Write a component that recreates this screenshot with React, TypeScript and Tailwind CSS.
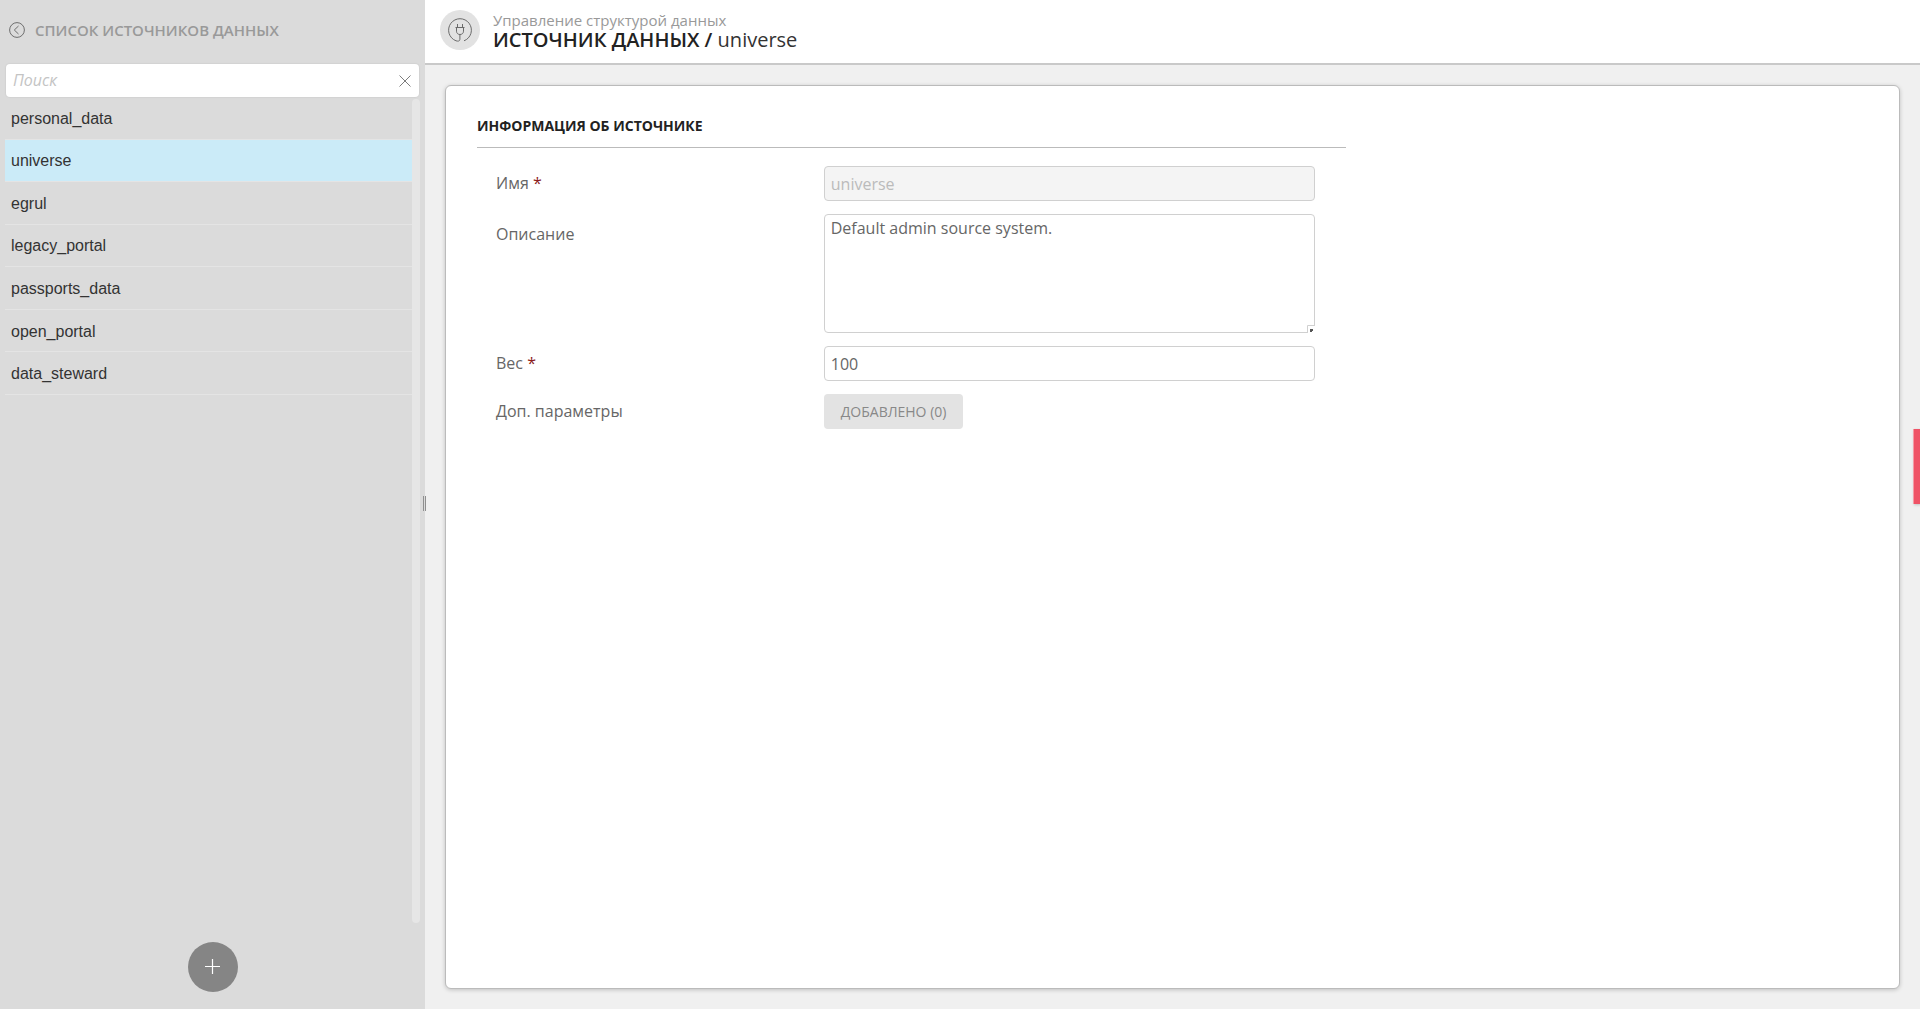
import { useState } from "react";

type Source = {
  name: string;
  description: string;
  weight: string;
};

const SOURCES: Source[] = [
  { name: "personal_data", description: "", weight: "100" },
  { name: "universe", description: "Default admin source system.", weight: "100" },
  { name: "egrul", description: "", weight: "100" },
  { name: "legacy_portal", description: "", weight: "100" },
  { name: "passports_data", description: "", weight: "100" },
  { name: "open_portal", description: "", weight: "100" },
  { name: "data_steward", description: "", weight: "100" },
];

const BackIcon = () => (
  <svg width="16" height="16" viewBox="0 0 16 16" fill="none" stroke="#6e6e6e">
    <circle cx="8" cy="8" r="7.4" />
    <path d="M9.5 4L5.3 8l4.2 4" />
  </svg>
);

const CloseIcon = () => (
  <svg width="12" height="12" viewBox="0 0 12 12" fill="none" stroke="#7c7c7c">
    <path d="M.5.5l11 11M11.5.5l-11 11" />
  </svg>
);

const PlusIcon = () => (
  <svg width="16" height="16" viewBox="0 0 16 16" fill="none" stroke="#fff">
    <path d="M7.5 0v15M0 7.5h15" strokeWidth="1.2" />
  </svg>
);

const PlugIcon = () => (
  <svg width="24" height="24" viewBox="0 0 24 24" fill="none" stroke="#6b6b6b">
    <path d="M16 22.8A11.4 11.4 0 1 0 8 22.8c1.8.6 3.9.5 3.9-1.5V16.5" />
    <path d="M7.500 9.500h9M8.500 9.500v3.700c0 2 1.500 3.300 3.500 3.300s3.500-1.300 3.500-3.300V9.500M9.500 9.500V6M14.500 9.500V6" />
  </svg>
);

// Corner of the textarea
const GripIcon = () => (
  <svg width="8" height="8" viewBox="0 0 8 8" className="absolute right-0 bottom-0">
    <path d="M0 0h8v8H0z" fill="#fff" />
    <path d="M.5 8V.5H8" fill="none" stroke="#d0d0d0" />
    <path d="M3 4h3v2H5v1H3z" fill="#555" />
  </svg>
);

const Required = () => <span className="text-[#8b1a1a]">*</span>;

export default function App() {
  const [search, setSearch] = useState("");
  const [current, setCurrent] = useState<Source>(SOURCES[1]);

  const visible = SOURCES.filter((s) => s.name.includes(search));

  return (
    <div className="relative flex min-h-screen overflow-hidden bg-[#f0f0f0] font-['Open_Sans',sans-serif] text-[#666]">
      <aside className="relative flex w-[425px] shrink-0 flex-col bg-[#dbdbdb]">
        <div className="flex h-16 items-center gap-[10px] pr-2 pb-1 pl-[9px]">
          <button type="button" aria-label="Назад">
            <BackIcon />
          </button>
          <h2 className="text-[15px] font-semibold text-[#999]">СПИСОК ИСТОЧНИКОВ ДАННЫХ</h2>
        </div>

        <div className="mx-[6px] flex h-[33px] items-center rounded-sm bg-white pr-2 shadow-[0_0_1px_1px_#d2d2d2]">
          <input
            type="text"
            aria-label="Поиск"
            placeholder="Поиск"
            value={search}
            onChange={(e) => setSearch(e.target.value)}
            className="min-w-0 flex-1 px-[7px] pb-0.5 text-base outline-none placeholder:text-[#c4c4c4] placeholder:italic"
          />
          <button type="button" aria-label="Очистить" onClick={() => setSearch("")}>
            <CloseIcon />
          </button>
        </div>

        <div className="mr-[5px] mb-[19px] ml-[5px] flex flex-1">
          <ul className="grid h-[298px] flex-1 grid-rows-7 font-['Liberation_Sans',Arial,sans-serif] text-base text-[#333]">
            {visible.map((s) => (
              <li key={s.name} className="flex border-b border-[#e4e4e4]">
                <button
                  type="button"
                  onClick={() => setCurrent(s)}
                  className={
                    s.name === current.name
                      ? "flex-1 bg-[#cbebf8] px-[6px] pt-0.5 text-left"
                      : "flex-1 px-[6px] pt-0.5 text-left"
                  }
                >
                  {s.name}
                </button>
              </li>
            ))}
          </ul>
          <div className="mt-[2px] w-2 rounded-full bg-[#e6e6e6]" />
        </div>

        <button
          type="button"
          aria-label="Добавить"
          className="mx-auto mb-[17px] flex size-[50px] items-center justify-center rounded-full bg-[#858585]"
        >
          <PlusIcon />
        </button>

        <div className="absolute top-[496px] -right-px z-10 h-[15px] w-[3px] border-x border-[#8f8f8f] bg-[#dbdbdb]" />
      </aside>

      <main className="flex min-w-0 flex-1 flex-col">
        <header className="flex h-[65px] items-center gap-[13px] border-b-2 border-[#c9c9c9] bg-white pb-[3px] pl-[15px]">
          <div className="flex size-10 items-center justify-center rounded-full bg-[#e2e2e2]">
            <PlugIcon />
          </div>
          <div className="pt-0.5">
            <p className="text-[15px] leading-[18px] text-[#999]">Управление структурой данных</p>
            <h1 className="text-xl leading-[22px] font-semibold text-[#222]">
              ИСТОЧНИК ДАННЫХ / <span className="font-normal text-[#333]">{current.name}</span>
            </h1>
          </div>
        </header>

        <div className="m-5 flex-1 rounded-md border border-[#bbb] bg-white px-[31px] pt-[30px] shadow-[0_1px_4px_rgba(0,0,0,0.2)]">
          <section className="w-[62.5%]">
            <h3 className="border-b border-[#bbb] pb-[11px] text-sm leading-5 font-bold text-[#222]">
              ИНФОРМАЦИЯ ОБ ИСТОЧНИКЕ
            </h3>
            <form className="grid grid-cols-[2fr_3fr] gap-y-[13px] pt-[18px] pr-[31px] pl-[19px] text-base">
              <label htmlFor="name" className="pt-[5px]">
                Имя <Required />
              </label>
              <input
                id="name"
                type="text"
                disabled
                value={current.name}
                className="h-[35px] w-full rounded border border-[#d0d0d0] bg-[#f4f4f4] px-[6px] text-[#bbb]"
              />

              <label htmlFor="description" className="pt-2">
                Описание
              </label>
              <div className="relative h-[119px]">
                <textarea
                  id="description"
                  value={current.description}
                  onChange={(e) => setCurrent({ ...current, description: e.target.value })}
                  className="block size-full resize-none rounded border border-[#d0d0d0] px-[6px] py-px"
                />
                <GripIcon />
              </div>

              <label htmlFor="weight" className="pt-[5px]">
                Вес <Required />
              </label>
              <input
                id="weight"
                type="text"
                value={current.weight}
                onChange={(e) => setCurrent({ ...current, weight: e.target.value })}
                className="h-[35px] w-full rounded border border-[#d0d0d0] px-[6px]"
              />

              <label htmlFor="params" className="pt-[5px]">
                Доп. параметры
              </label>
              <button
                id="params"
                type="button"
                className="h-[35px] justify-self-start rounded-sm bg-[#e3e3e3] px-[17px] text-sm text-[#888]"
              >
                ДОБАВЛЕНО (0)
              </button>
            </form>
          </section>
        </div>
      </main>

      <button
        type="button"
        aria-label="Уведомления"
        className="absolute top-[429px] right-0 h-[75px] w-[7px] border-l border-[#f59aa5] bg-[#ef5366] shadow-[1px_1px_3px_rgba(0,0,0,0.2)]"
      />
    </div>
  );
}
